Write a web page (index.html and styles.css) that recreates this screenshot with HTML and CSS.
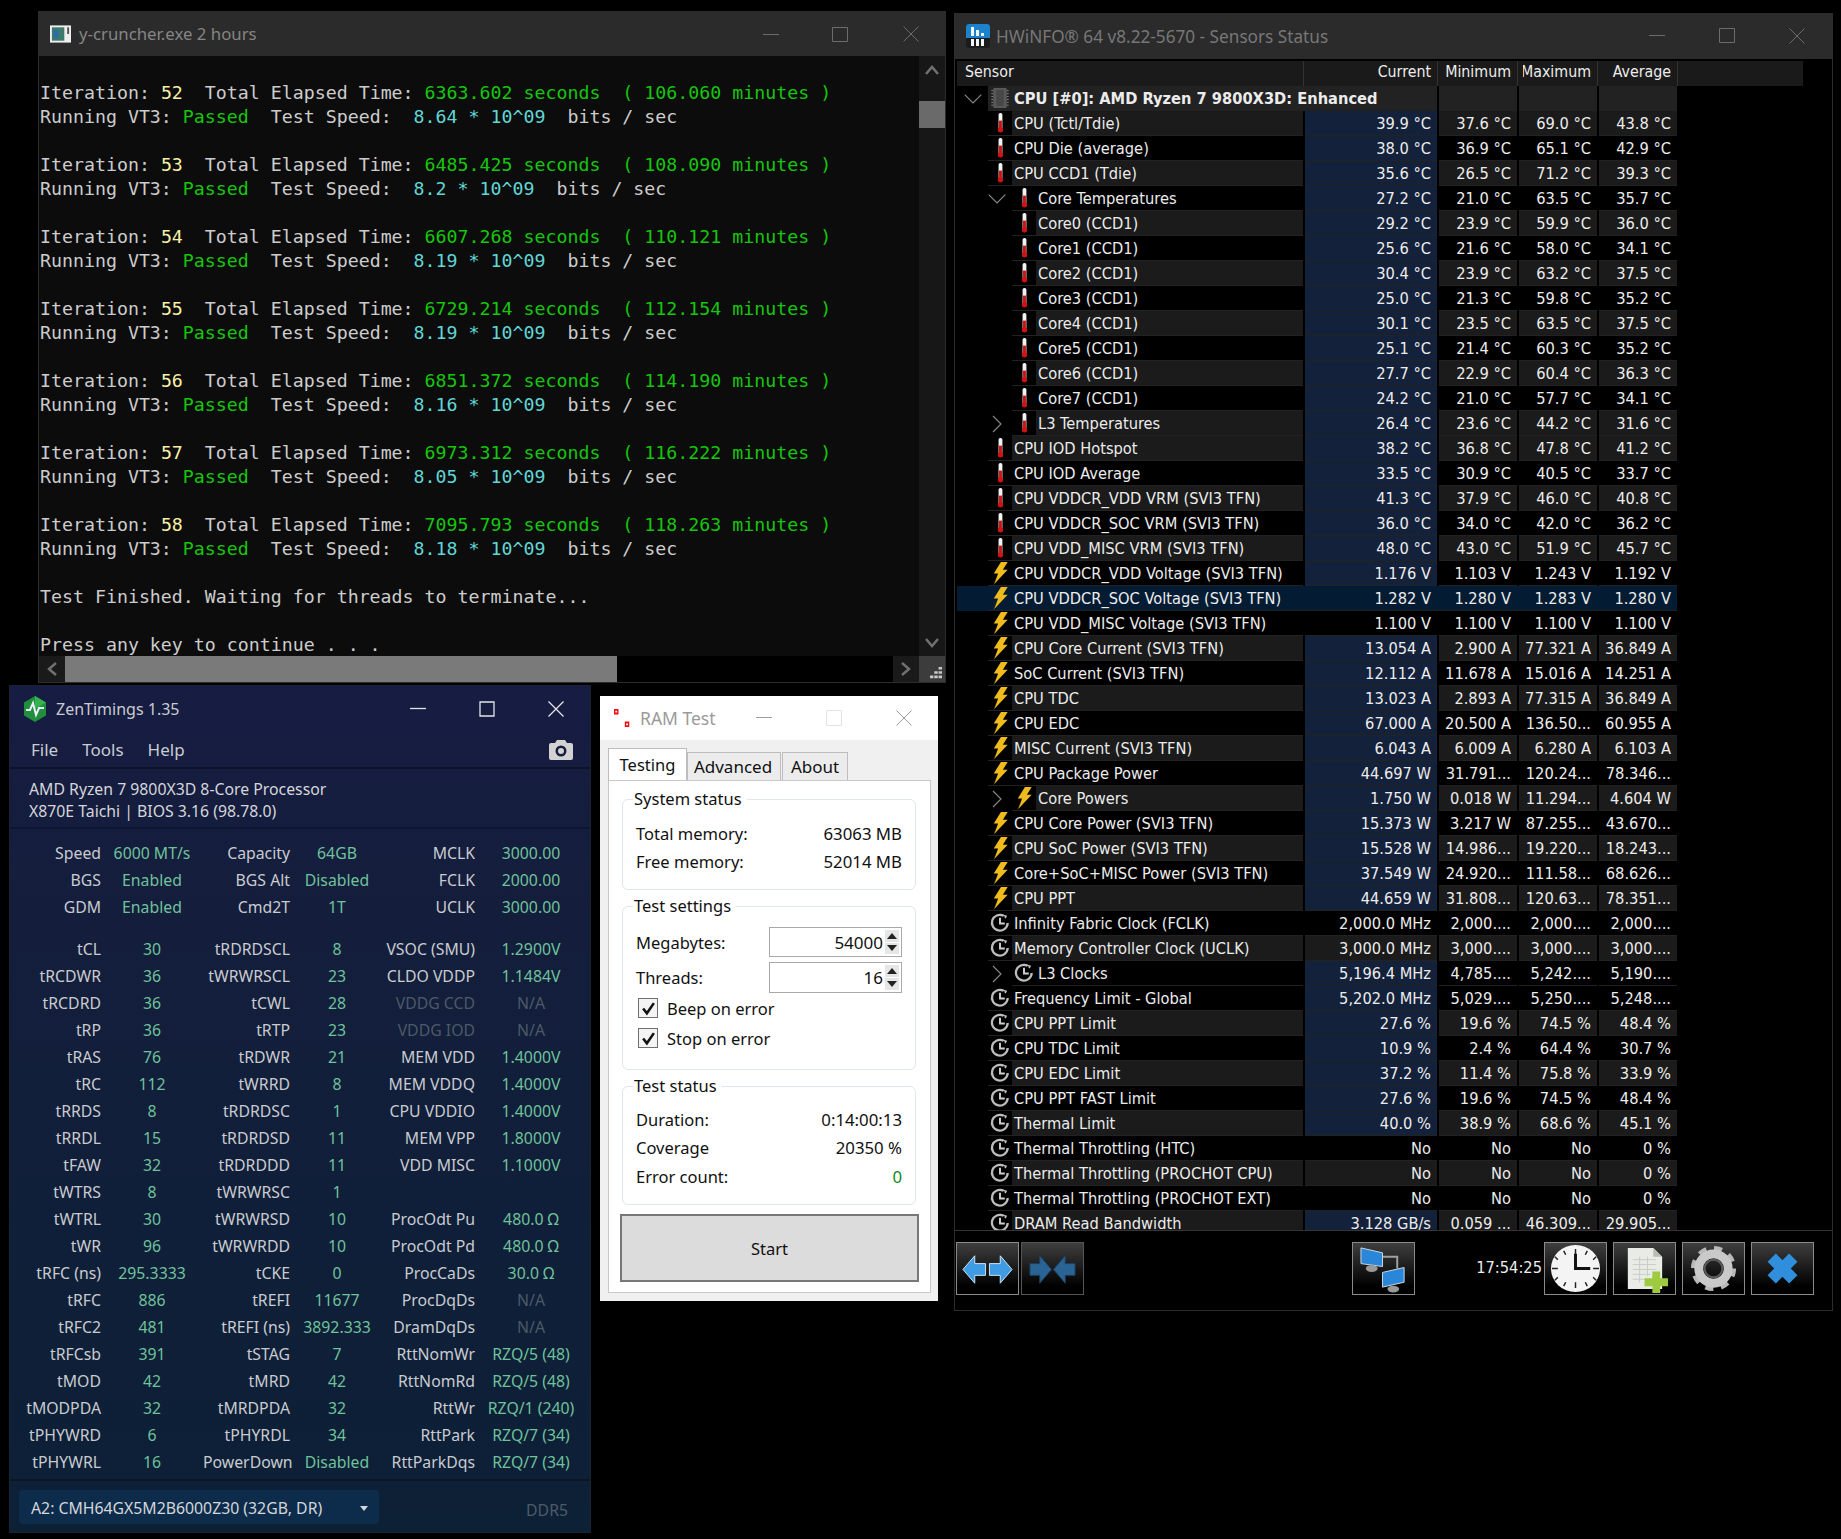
FILE: index.html
```html
<!DOCTYPE html>
<html lang="en">
<head>
<meta charset="utf-8">
<title>Desktop</title>
<link rel="stylesheet" href="styles.css">
</head>
<body>
<svg class="sprite" xmlns="http://www.w3.org/2000/svg">
  <symbol id="t" viewBox="0 0 24 25"><rect x="10.500" y="2" width="4" height="17" rx="1.800" fill="#f2f2f2"/><rect x="11" y="10" width="3" height="9" fill="#c91414"/><circle cx="12.500" cy="19.600" r="2.800" fill="#d31212"/></symbol>
  <symbol id="b" viewBox="0 0 24 25"><path d="M13 1h7l-5 8h5L6 24l4-11H5.500z" fill="#f0bb1c"/><path d="M10 13 6 24l-1 1z" fill="#6d5a1c"/></symbol>
  <symbol id="k" viewBox="0 0 24 25"><path d="M15.500 4.900A8.200 8.200 0 1 0 20 12.500" fill="none" stroke="#bcbcbc" stroke-width="2.400"/><path d="M12.300 3.500l6 2-1 2" fill="none" stroke="#bcbcbc" stroke-width="1.600"/><path d="M12 7v6h5" fill="none" stroke="#d0d0d0" stroke-width="2"/></symbol>
  <symbol id="dn" viewBox="0 0 18 10"><path d="M.7.7 9 9 17.300.7" fill="none" stroke="#8a8a8a" stroke-width="1.100"/></symbol>
  <symbol id="rt" viewBox="0 0 18 18"><path d="M5 1l8 8-8 8" fill="none" stroke="#8a8a8a" stroke-width="1.100"/></symbol>
</svg>

<main class="desk">

<section class="win con">
  <header class="con-title">
    <svg class="con-icon" viewBox="0 0 22 18"><rect width="22" height="18" fill="#eeeeee"/><rect x="2" y="2" width="13" height="14" fill="#3d7a6c"/><rect x="4" y="5" width="5" height="8" fill="#2e6aa8"/><rect x="18" y="2" width="2" height="7" fill="#555"/></svg>
    <span class="con-name">y-cruncher.exe 2 hours</span>
    <span class="ctl ctl-con">
      <svg viewBox="0 0 16 16"><path d="M0 8.500h16"/></svg>
      <svg viewBox="0 0 16 16"><path d="M.5 1.500h15v14H.5z"/></svg>
      <svg viewBox="0 0 16 16"><path d="M.5.500l15 15M15.500.500l-15 15"/></svg>
    </span>
  </header>
  <div class="con-body">
    <div class="con-text">
      <div class="ln"></div>
      <div class="ln">Iteration: <b class="y">52</b>  Total Elapsed Time: <b class="g">6363.602 seconds  ( 106.060 minutes )</b></div>
      <div class="ln">Running VT3: <b class="g">Passed</b>  Test Speed:  <b class="c">8.64 * 10^09</b>  bits / sec</div>
      <div class="ln"></div>
      <div class="ln">Iteration: <b class="y">53</b>  Total Elapsed Time: <b class="g">6485.425 seconds  ( 108.090 minutes )</b></div>
      <div class="ln">Running VT3: <b class="g">Passed</b>  Test Speed:  <b class="c">8.2 * 10^09</b>  bits / sec</div>
      <div class="ln"></div>
      <div class="ln">Iteration: <b class="y">54</b>  Total Elapsed Time: <b class="g">6607.268 seconds  ( 110.121 minutes )</b></div>
      <div class="ln">Running VT3: <b class="g">Passed</b>  Test Speed:  <b class="c">8.19 * 10^09</b>  bits / sec</div>
      <div class="ln"></div>
      <div class="ln">Iteration: <b class="y">55</b>  Total Elapsed Time: <b class="g">6729.214 seconds  ( 112.154 minutes )</b></div>
      <div class="ln">Running VT3: <b class="g">Passed</b>  Test Speed:  <b class="c">8.19 * 10^09</b>  bits / sec</div>
      <div class="ln"></div>
      <div class="ln">Iteration: <b class="y">56</b>  Total Elapsed Time: <b class="g">6851.372 seconds  ( 114.190 minutes )</b></div>
      <div class="ln">Running VT3: <b class="g">Passed</b>  Test Speed:  <b class="c">8.16 * 10^09</b>  bits / sec</div>
      <div class="ln"></div>
      <div class="ln">Iteration: <b class="y">57</b>  Total Elapsed Time: <b class="g">6973.312 seconds  ( 116.222 minutes )</b></div>
      <div class="ln">Running VT3: <b class="g">Passed</b>  Test Speed:  <b class="c">8.05 * 10^09</b>  bits / sec</div>
      <div class="ln"></div>
      <div class="ln">Iteration: <b class="y">58</b>  Total Elapsed Time: <b class="g">7095.793 seconds  ( 118.263 minutes )</b></div>
      <div class="ln">Running VT3: <b class="g">Passed</b>  Test Speed:  <b class="c">8.18 * 10^09</b>  bits / sec</div>
      <div class="ln"></div>
      <div class="ln">Test Finished. Waiting for threads to terminate...</div>
      <div class="ln"></div>
      <div class="ln">Press any key to continue . . .</div>
    </div>
    <div class="vbar">
      <svg class="bar-arrow" viewBox="0 0 16 12"><path d="M2 10l6-7 6 7"/></svg>
      <div class="vthumb"></div>
      <svg class="bar-arrow vdown" viewBox="0 0 16 12"><path d="M2 2l6 7 6-7"/></svg>
    </div>
  </div>
  <div class="hbar">
    <span class="hbtn"><svg class="bar-arrow" viewBox="0 0 12 16"><path d="M10 2L3 8l7 6"/></svg></span>
    <div class="hthumb"></div>
    <span class="hbtn hright"><svg class="bar-arrow" viewBox="0 0 12 16"><path d="M2 2l7 6-7 6"/></svg></span>
    <span class="grip"><svg viewBox="0 0 14 14"><path d="M10 0h4v3h-4zM5 5h4v3H5zM10 5h4v3h-4zM0 10h4v3H0zM5 10h4v3H5zM10 10h4v3h-4z"/></svg></span>
  </div>
</section>

<section class="win zen">
  <header class="zen-title">
    <svg class="zen-logo" viewBox="0 0 24 26"><path d="M12 0l11 6.500v13L12 26 1 19.500v-13z" fill="#1f8f3c"/><path d="M12 0l11 6.500L12 13z" fill="#34b34f"/><path d="M3 14h4l3-7 3 12 3-7h5" fill="none" stroke="#eef" stroke-width="2"/></svg>
    <span class="zen-name">ZenTimings 1.35</span>
    <span class="ctl ctl-zen">
      <svg viewBox="0 0 16 16"><path d="M0 7.500h16"/></svg>
      <svg viewBox="0 0 16 16"><path d="M1 1h14v14H1z"/></svg>
      <svg viewBox="0 0 16 16"><path d="M.5.500l15 15M15.500.500l-15 15"/></svg>
    </span>
  </header>
  <nav class="zen-menu">
    <span>File</span><span>Tools</span><span>Help</span>
    <svg class="zen-cam" viewBox="0 0 24 20"><path fill-rule="evenodd" d="M8 0h8l2 3h4a2 2 0 0 1 2 2v13a2 2 0 0 1-2 2H2a2 2 0 0 1-2-2V5a2 2 0 0 1 2-2h4zM12 5.500a5.500 5.500 0 1 0 0 11 5.500 5.500 0 0 0 0-11zM12 8a3 3 0 1 1 0 6 3 3 0 0 1 0-6z" fill="#d2d2d2"/></svg>
  </nav>
  <div class="zen-cpu">AMD Ryzen 7 9800X3D 8-Core Processor<br>X870E Taichi | BIOS 3.16 (98.78.0)</div>
  <div class="zen-body">
    <div class="zgrid zgrid-top">
      <span>Speed</span><i>6000 MT/s</i><span>Capacity</span><i>64GB</i><span>MCLK</span><i>3000.00</i>
      <span>BGS</span><i>Enabled</i><span>BGS Alt</span><i>Disabled</i><span>FCLK</span><i>2000.00</i>
      <span>GDM</span><i>Enabled</i><span>Cmd2T</span><i>1T</i><span>UCLK</span><i>3000.00</i>
    </div>
    <div class="zgrid">
      <span>tCL</span><i>30</i><span>tRDRDSCL</span><i>8</i><span>VSOC (SMU)</span><i>1.2900V</i>
      <span>tRCDWR</span><i>36</i><span>tWRWRSCL</span><i>23</i><span>CLDO VDDP</span><i>1.1484V</i>
      <span>tRCDRD</span><i>36</i><span>tCWL</span><i>28</i><span class="dim">VDDG CCD</span><i class="dim">N/A</i>
      <span>tRP</span><i>36</i><span>tRTP</span><i>23</i><span class="dim">VDDG IOD</span><i class="dim">N/A</i>
      <span>tRAS</span><i>76</i><span>tRDWR</span><i>21</i><span>MEM VDD</span><i>1.4000V</i>
      <span>tRC</span><i>112</i><span>tWRRD</span><i>8</i><span>MEM VDDQ</span><i>1.4000V</i>
      <span>tRRDS</span><i>8</i><span>tRDRDSC</span><i>1</i><span>CPU VDDIO</span><i>1.4000V</i>
      <span>tRRDL</span><i>15</i><span>tRDRDSD</span><i>11</i><span>MEM VPP</span><i>1.8000V</i>
      <span>tFAW</span><i>32</i><span>tRDRDDD</span><i>11</i><span>VDD MISC</span><i>1.1000V</i>
      <span>tWTRS</span><i>8</i><span>tWRWRSC</span><i>1</i><span></span><i></i>
      <span>tWTRL</span><i>30</i><span>tWRWRSD</span><i>10</i><span>ProcOdt Pu</span><i>480.0 Ω</i>
      <span>tWR</span><i>96</i><span>tWRWRDD</span><i>10</i><span>ProcOdt Pd</span><i>480.0 Ω</i>
      <span>tRFC (ns)</span><i>295.3333</i><span>tCKE</span><i>0</i><span>ProcCaDs</span><i>30.0 Ω</i>
      <span>tRFC</span><i>886</i><span>tREFI</span><i>11677</i><span>ProcDqDs</span><i class="dim">N/A</i>
      <span>tRFC2</span><i>481</i><span>tREFI (ns)</span><i>3892.333</i><span>DramDqDs</span><i class="dim">N/A</i>
      <span>tRFCsb</span><i>391</i><span>tSTAG</span><i>7</i><span>RttNomWr</span><i>RZQ/5 (48)</i>
      <span>tMOD</span><i>42</i><span>tMRD</span><i>42</i><span>RttNomRd</span><i>RZQ/5 (48)</i>
      <span>tMODPDA</span><i>32</i><span>tMRDPDA</span><i>32</i><span>RttWr</span><i>RZQ/1 (240)</i>
      <span>tPHYWRD</span><i>6</i><span>tPHYRDL</span><i>34</i><span>RttPark</span><i>RZQ/7 (34)</i>
      <span>tPHYWRL</span><i>16</i><span>PowerDown</span><i>Disabled</i><span>RttParkDqs</span><i>RZQ/7 (34)</i>
    </div>
  </div>
  <footer class="zen-foot">
    <div class="zen-sel"><span>A2: CMH64GX5M2B6000Z30 (32GB, DR)</span><em class="caret"></em></div>
    <span class="zen-ddr">DDR5</span>
  </footer>
</section>

<section class="win ram">
  <header class="ram-title">
    <svg class="ram-icon" viewBox="0 0 20 20"><path d="M0 0h5v6H0zM12 14h5v6h-5z" fill="#f01010"/><path d="M1.500 2h2v2h-2zM13.500 16h2v2h-2z" fill="#fff"/></svg>
    <span class="ram-name">RAM Test</span>
    <span class="ctl ctl-ram">
      <svg viewBox="0 0 16 16"><path class="ln-c" d="M0 7.500h16"/></svg>
      <svg viewBox="0 0 16 16"><path class="fd" d="M.5.500h15v15H.5z"/></svg>
      <svg viewBox="0 0 16 16"><path class="ln-c" d="M.5.500l15 15M15.500.500l-15 15"/></svg>
    </span>
  </header>
  <div class="tabs">
    <span class="tab on">Testing</span><span class="tab t-adv">Advanced</span><span class="tab t-abt">About</span>
  </div>
  <div class="page">
    <div class="grp grp-sys">
      <span class="legend">System status</span>
      <div class="kv"><span>Total memory:</span><span>63063 MB</span></div>
      <div class="kv"><span>Free memory:</span><span>52014 MB</span></div>
    </div>
    <div class="grp grp-set">
      <span class="legend">Test settings</span>
      <div class="field"><span>Megabytes:</span><div class="spin"><span class="num">54000</span><span class="arrows"><em class="up"></em><em class="down"></em></span></div></div>
      <div class="field"><span>Threads:</span><div class="spin"><span class="num">16</span><span class="arrows"><em class="up"></em><em class="down"></em></span></div></div>
      <label class="chk"><span class="box"><svg viewBox="0 0 14 14"><path d="M2 7l3.500 4.500L12 2"/></svg></span>Beep on error</label>
      <label class="chk"><span class="box"><svg viewBox="0 0 14 14"><path d="M2 7l3.500 4.500L12 2"/></svg></span>Stop on error</label>
    </div>
    <div class="grp grp-stat">
      <span class="legend">Test status</span>
      <div class="kv"><span>Duration:</span><span>0:14:00:13</span></div>
      <div class="kv"><span>Coverage</span><span>20350 %</span></div>
      <div class="kv"><span>Error count:</span><span class="ok">0</span></div>
    </div>
    <button class="start">Start</button>
  </div>
</section>

<section class="win hw">
  <header class="hw-title">
    <svg class="hw-logo" viewBox="0 0 24 24"><rect width="24" height="24" rx="3" fill="#1b1b1b"/><path d="M3 0h18a3 3 0 0 1 3 3v11H0V3a3 3 0 0 1 3-3z" fill="#1d82cc"/><path d="M5 3h3v9H5zM10 6h3v6h-3zM15 9h3v3h-3zM5 15h3v7H5zM10 15h3v7h-3zM15 15h3v7h-3z" fill="#f2f6fa"/></svg>
    <span class="hw-name">HWiNFO® 64 v8.22-5670 - Sensors Status</span>
    <span class="ctl ctl-hw">
      <svg viewBox="0 0 16 16"><path d="M0 7.500h16"/></svg>
      <svg viewBox="0 0 16 16"><path d="M.5.500h15v14H.5z"/></svg>
      <svg viewBox="0 0 16 16"><path d="M.5.500l15 15M15.500.500l-15 15"/></svg>
    </span>
  </header>
  <div class="hw-table">
    <div class="hdr"><span class="h-s">Sensor</span><span class="h-c">Current</span><span class="h-v">Minimum</span><span class="h-v">Maximum</span><span class="h-v">Average</span></div>

    <div class="row top"><span class="ind"><svg class="dn"><use href="#dn"/></svg></span><span class="ic"><svg viewBox="0 0 24 25"><path d="M3 5h2M3 8h2M3 11h2M3 14h2M3 17h2M3 20h2M19 5h2M19 8h2M19 11h2M19 14h2M19 17h2M19 20h2" stroke="#8a8a8a"/><rect x="5" y="2" width="14" height="21" rx="1" fill="#5a5a5a"/><path d="M8 4h8v17H8z" fill="#484848"/></svg></span><span class="lbl">CPU [#0]: AMD Ryzen 7 9800X3D: Enhanced</span><span class="v"></span><span class="v"></span><span class="v"></span></div>

    <div class="row d"><span class="ind"></span><span class="ic"><svg><use href="#t"/></svg></span><span class="lbl">CPU (Tctl/Tdie)</span><span class="cur">39.9 °C</span><span class="v">37.6 °C</span><span class="v">69.0 °C</span><span class="v">43.8 °C</span></div>
    <div class="row"><span class="ind"></span><span class="ic"><svg><use href="#t"/></svg></span><span class="lbl">CPU Die (average)</span><span class="cur">38.0 °C</span><span class="v">36.9 °C</span><span class="v">65.1 °C</span><span class="v">42.9 °C</span></div>
    <div class="row d"><span class="ind"></span><span class="ic"><svg><use href="#t"/></svg></span><span class="lbl">CPU CCD1 (Tdie)</span><span class="cur">35.6 °C</span><span class="v">26.5 °C</span><span class="v">71.2 °C</span><span class="v">39.3 °C</span></div>
    <div class="row l2"><span class="ind"><svg class="dn"><use href="#dn"/></svg></span><span class="ic"><svg><use href="#t"/></svg></span><span class="lbl">Core Temperatures</span><span class="cur">27.2 °C</span><span class="v">21.0 °C</span><span class="v">63.5 °C</span><span class="v">35.7 °C</span></div>
    <div class="row d l2"><span class="ind"></span><span class="ic"><svg><use href="#t"/></svg></span><span class="lbl">Core0 (CCD1)</span><span class="cur">29.2 °C</span><span class="v">23.9 °C</span><span class="v">59.9 °C</span><span class="v">36.0 °C</span></div>
    <div class="row l2"><span class="ind"></span><span class="ic"><svg><use href="#t"/></svg></span><span class="lbl">Core1 (CCD1)</span><span class="cur">25.6 °C</span><span class="v">21.6 °C</span><span class="v">58.0 °C</span><span class="v">34.1 °C</span></div>
    <div class="row d l2"><span class="ind"></span><span class="ic"><svg><use href="#t"/></svg></span><span class="lbl">Core2 (CCD1)</span><span class="cur">30.4 °C</span><span class="v">23.9 °C</span><span class="v">63.2 °C</span><span class="v">37.5 °C</span></div>
    <div class="row l2"><span class="ind"></span><span class="ic"><svg><use href="#t"/></svg></span><span class="lbl">Core3 (CCD1)</span><span class="cur">25.0 °C</span><span class="v">21.3 °C</span><span class="v">59.8 °C</span><span class="v">35.2 °C</span></div>
    <div class="row d l2"><span class="ind"></span><span class="ic"><svg><use href="#t"/></svg></span><span class="lbl">Core4 (CCD1)</span><span class="cur">30.1 °C</span><span class="v">23.5 °C</span><span class="v">63.5 °C</span><span class="v">37.5 °C</span></div>
    <div class="row l2"><span class="ind"></span><span class="ic"><svg><use href="#t"/></svg></span><span class="lbl">Core5 (CCD1)</span><span class="cur">25.1 °C</span><span class="v">21.4 °C</span><span class="v">60.3 °C</span><span class="v">35.2 °C</span></div>
    <div class="row d l2"><span class="ind"></span><span class="ic"><svg><use href="#t"/></svg></span><span class="lbl">Core6 (CCD1)</span><span class="cur">27.7 °C</span><span class="v">22.9 °C</span><span class="v">60.4 °C</span><span class="v">36.3 °C</span></div>
    <div class="row l2"><span class="ind"></span><span class="ic"><svg><use href="#t"/></svg></span><span class="lbl">Core7 (CCD1)</span><span class="cur">24.2 °C</span><span class="v">21.0 °C</span><span class="v">57.7 °C</span><span class="v">34.1 °C</span></div>
    <div class="row d l2"><span class="ind"><svg class="rt"><use href="#rt"/></svg></span><span class="ic"><svg><use href="#t"/></svg></span><span class="lbl">L3 Temperatures</span><span class="cur">26.4 °C</span><span class="v">23.6 °C</span><span class="v">44.2 °C</span><span class="v">31.6 °C</span></div>
    <div class="row d"><span class="ind"></span><span class="ic"><svg><use href="#t"/></svg></span><span class="lbl">CPU IOD Hotspot</span><span class="cur">38.2 °C</span><span class="v">36.8 °C</span><span class="v">47.8 °C</span><span class="v">41.2 °C</span></div>
    <div class="row"><span class="ind"></span><span class="ic"><svg><use href="#t"/></svg></span><span class="lbl">CPU IOD Average</span><span class="cur">33.5 °C</span><span class="v">30.9 °C</span><span class="v">40.5 °C</span><span class="v">33.7 °C</span></div>
    <div class="row d"><span class="ind"></span><span class="ic"><svg><use href="#t"/></svg></span><span class="lbl">CPU VDDCR_VDD VRM (SVI3 TFN)</span><span class="cur">41.3 °C</span><span class="v">37.9 °C</span><span class="v">46.0 °C</span><span class="v">40.8 °C</span></div>
    <div class="row"><span class="ind"></span><span class="ic"><svg><use href="#t"/></svg></span><span class="lbl">CPU VDDCR_SOC VRM (SVI3 TFN)</span><span class="cur">36.0 °C</span><span class="v">34.0 °C</span><span class="v">42.0 °C</span><span class="v">36.2 °C</span></div>
    <div class="row d"><span class="ind"></span><span class="ic"><svg><use href="#t"/></svg></span><span class="lbl">CPU VDD_MISC VRM (SVI3 TFN)</span><span class="cur">48.0 °C</span><span class="v">43.0 °C</span><span class="v">51.9 °C</span><span class="v">45.7 °C</span></div>
    <div class="row"><span class="ind"></span><span class="ic"><svg><use href="#b"/></svg></span><span class="lbl">CPU VDDCR_VDD Voltage (SVI3 TFN)</span><span class="cur">1.176 V</span><span class="v">1.103 V</span><span class="v">1.243 V</span><span class="v">1.192 V</span></div>
    <div class="row sel"><span class="ind"></span><span class="ic"><svg><use href="#b"/></svg></span><span class="lbl">CPU VDDCR_SOC Voltage (SVI3 TFN)</span><span class="cur">1.282 V</span><span class="v">1.280 V</span><span class="v">1.283 V</span><span class="v">1.280 V</span></div>
    <div class="row"><span class="ind"></span><span class="ic"><svg><use href="#b"/></svg></span><span class="lbl">CPU VDD_MISC Voltage (SVI3 TFN)</span><span class="cur off">1.100 V</span><span class="v">1.100 V</span><span class="v">1.100 V</span><span class="v">1.100 V</span></div>
    <div class="row d"><span class="ind"></span><span class="ic"><svg><use href="#b"/></svg></span><span class="lbl">CPU Core Current (SVI3 TFN)</span><span class="cur">13.054 A</span><span class="v">2.900 A</span><span class="v">77.321 A</span><span class="v">36.849 A</span></div>
    <div class="row"><span class="ind"></span><span class="ic"><svg><use href="#b"/></svg></span><span class="lbl">SoC Current (SVI3 TFN)</span><span class="cur">12.112 A</span><span class="v">11.678 A</span><span class="v">15.016 A</span><span class="v">14.251 A</span></div>
    <div class="row d"><span class="ind"></span><span class="ic"><svg><use href="#b"/></svg></span><span class="lbl">CPU TDC</span><span class="cur">13.023 A</span><span class="v">2.893 A</span><span class="v">77.315 A</span><span class="v">36.849 A</span></div>
    <div class="row"><span class="ind"></span><span class="ic"><svg><use href="#b"/></svg></span><span class="lbl">CPU EDC</span><span class="cur">67.000 A</span><span class="v">20.500 A</span><span class="v">136.50...</span><span class="v">60.955 A</span></div>
    <div class="row d"><span class="ind"></span><span class="ic"><svg><use href="#b"/></svg></span><span class="lbl">MISC Current (SVI3 TFN)</span><span class="cur">6.043 A</span><span class="v">6.009 A</span><span class="v">6.280 A</span><span class="v">6.103 A</span></div>
    <div class="row"><span class="ind"></span><span class="ic"><svg><use href="#b"/></svg></span><span class="lbl">CPU Package Power</span><span class="cur">44.697 W</span><span class="v">31.791...</span><span class="v">120.24...</span><span class="v">78.346...</span></div>
    <div class="row d l2"><span class="ind"><svg class="rt"><use href="#rt"/></svg></span><span class="ic"><svg><use href="#b"/></svg></span><span class="lbl">Core Powers</span><span class="cur">1.750 W</span><span class="v">0.018 W</span><span class="v">11.294...</span><span class="v">4.604 W</span></div>
    <div class="row"><span class="ind"></span><span class="ic"><svg><use href="#b"/></svg></span><span class="lbl">CPU Core Power (SVI3 TFN)</span><span class="cur">15.373 W</span><span class="v">3.217 W</span><span class="v">87.255...</span><span class="v">43.670...</span></div>
    <div class="row d"><span class="ind"></span><span class="ic"><svg><use href="#b"/></svg></span><span class="lbl">CPU SoC Power (SVI3 TFN)</span><span class="cur">15.528 W</span><span class="v">14.986...</span><span class="v">19.220...</span><span class="v">18.243...</span></div>
    <div class="row"><span class="ind"></span><span class="ic"><svg><use href="#b"/></svg></span><span class="lbl">Core+SoC+MISC Power (SVI3 TFN)</span><span class="cur">37.549 W</span><span class="v">24.920...</span><span class="v">111.58...</span><span class="v">68.626...</span></div>
    <div class="row d"><span class="ind"></span><span class="ic"><svg><use href="#b"/></svg></span><span class="lbl">CPU PPT</span><span class="cur">44.659 W</span><span class="v">31.808...</span><span class="v">120.63...</span><span class="v">78.351...</span></div>
    <div class="row"><span class="ind"></span><span class="ic"><svg><use href="#k"/></svg></span><span class="lbl">Infinity Fabric Clock (FCLK)</span><span class="cur off">2,000.0 MHz</span><span class="v">2,000....</span><span class="v">2,000....</span><span class="v">2,000....</span></div>
    <div class="row d"><span class="ind"></span><span class="ic"><svg><use href="#k"/></svg></span><span class="lbl">Memory Controller Clock (UCLK)</span><span class="cur off">3,000.0 MHz</span><span class="v">3,000....</span><span class="v">3,000....</span><span class="v">3,000....</span></div>
    <div class="row l2"><span class="ind"><svg class="rt"><use href="#rt"/></svg></span><span class="ic"><svg><use href="#k"/></svg></span><span class="lbl">L3 Clocks</span><span class="cur">5,196.4 MHz</span><span class="v">4,785....</span><span class="v">5,242....</span><span class="v">5,190....</span></div>
    <div class="row"><span class="ind"></span><span class="ic"><svg><use href="#k"/></svg></span><span class="lbl">Frequency Limit - Global</span><span class="cur">5,202.0 MHz</span><span class="v">5,029....</span><span class="v">5,250....</span><span class="v">5,248....</span></div>
    <div class="row d"><span class="ind"></span><span class="ic"><svg><use href="#k"/></svg></span><span class="lbl">CPU PPT Limit</span><span class="cur">27.6 %</span><span class="v">19.6 %</span><span class="v">74.5 %</span><span class="v">48.4 %</span></div>
    <div class="row"><span class="ind"></span><span class="ic"><svg><use href="#k"/></svg></span><span class="lbl">CPU TDC Limit</span><span class="cur">10.9 %</span><span class="v">2.4 %</span><span class="v">64.4 %</span><span class="v">30.7 %</span></div>
    <div class="row d"><span class="ind"></span><span class="ic"><svg><use href="#k"/></svg></span><span class="lbl">CPU EDC Limit</span><span class="cur">37.2 %</span><span class="v">11.4 %</span><span class="v">75.8 %</span><span class="v">33.9 %</span></div>
    <div class="row"><span class="ind"></span><span class="ic"><svg><use href="#k"/></svg></span><span class="lbl">CPU PPT FAST Limit</span><span class="cur">27.6 %</span><span class="v">19.6 %</span><span class="v">74.5 %</span><span class="v">48.4 %</span></div>
    <div class="row d"><span class="ind"></span><span class="ic"><svg><use href="#k"/></svg></span><span class="lbl">Thermal Limit</span><span class="cur">40.0 %</span><span class="v">38.9 %</span><span class="v">68.6 %</span><span class="v">45.1 %</span></div>
    <div class="row"><span class="ind"></span><span class="ic"><svg><use href="#k"/></svg></span><span class="lbl">Thermal Throttling (HTC)</span><span class="cur off">No</span><span class="v">No</span><span class="v">No</span><span class="v">0 %</span></div>
    <div class="row d"><span class="ind"></span><span class="ic"><svg><use href="#k"/></svg></span><span class="lbl">Thermal Throttling (PROCHOT CPU)</span><span class="cur off">No</span><span class="v">No</span><span class="v">No</span><span class="v">0 %</span></div>
    <div class="row"><span class="ind"></span><span class="ic"><svg><use href="#k"/></svg></span><span class="lbl">Thermal Throttling (PROCHOT EXT)</span><span class="cur off">No</span><span class="v">No</span><span class="v">No</span><span class="v">0 %</span></div>
    <div class="row d"><span class="ind"></span><span class="ic"><svg><use href="#k"/></svg></span><span class="lbl">DRAM Read Bandwidth</span><span class="cur">3.128 GB/s</span><span class="v">0.059 ...</span><span class="v">46.309...</span><span class="v">29.905...</span></div>
  </div>
  <footer class="hw-foot">
    <button class="tb"><svg viewBox="0 0 62 52"><path d="M6 27 18 13v8h11v12H18v8zM56 27 44 13v8H33v12h11v8z" fill="#3f9ce3" stroke="#cbe3f5"/></svg></button>
    <button class="tb tb-dim"><svg viewBox="0 0 62 52"><path d="M30 27 18 13v8H8v12h10v8zM32 27l12-14v8h10v12H44v8z" fill="#2a6494" stroke="#1d3f5e"/></svg></button>
    <button class="tb tb-net"><svg viewBox="0 0 62 52"><path d="M30 14h15v12" fill="none" stroke="#a0a0a0" stroke-width="2"/><path d="M8 5l22 5v14L8 21z" fill="#2a86d8" stroke="#cfd8e0"/><ellipse cx="19" cy="26" rx="6" ry="3.500" fill="#9a9a9a"/><path d="M30 30l22-5v15l-22 5z" fill="#2a86d8" stroke="#cfd8e0"/><ellipse cx="41" cy="47" rx="6" ry="3.500" fill="#9a9a9a"/></svg></button>
    <span class="clock-time">17:54:25</span>
    <button class="tb"><svg viewBox="0 0 62 52"><ellipse cx="31" cy="26" rx="25" ry="24" fill="#f4f4f4"/><path d="M31 6v6M31 40v6M7 26h6M49 26h6M19 8l2 4M43 8l-2 4M19 44l2-4M43 44l-2-4M10 14l3 3M52 14l-3 3M10 38l3-3M52 38l-3-3" stroke="#222" stroke-width="1.500"/><path d="M31 11v15h15" fill="none" stroke="#111" stroke-width="3"/></svg></button>
    <button class="tb"><svg viewBox="0 0 62 52"><path d="M14 5h26l9 9v33H14z" fill="#e9ebe6"/><path d="M40 5v9h9z" fill="#b9bcb4"/><path d="M19 17h24M19 22h24M19 27h24M19 32h18M19 37h18M26 14v26M34 14v20" stroke="#c9ccc4"/><path d="M39 29h8v7h8v8h-8v7h-8v-7h-8v-8h8z" fill="#9ccb3f"/></svg></button>
    <button class="tb"><svg viewBox="0 0 62 52"><circle cx="31" cy="26" r="20" fill="none" stroke="#b9b9b9" stroke-width="6" stroke-dasharray="8 7.700"/><circle cx="31" cy="26" r="15" fill="none" stroke="#c9c9c9" stroke-width="9"/><circle cx="31" cy="26" r="9" fill="none" stroke="#5c5c5c" stroke-width="2"/></svg></button>
    <button class="tb"><svg viewBox="0 0 62 52"><path d="M20 15l22 22M42 15 20 37" fill="none" stroke="#2f8fdc" stroke-width="12"/></svg></button>
  </footer>
</section>

</main>
</body>
</html>
```

FILE: styles.css
```css
html, body { margin: 0; padding: 0; background: #000; }
body { width: 1841px; height: 1539px; overflow: hidden; }
.sprite { display: none; }
.desk { position: relative; width: 1841px; height: 1539px; background: #000; }
.win { position: absolute; box-sizing: border-box; overflow: hidden; }
.ctl { margin-left: auto; display: flex; }
.ctl svg { display: block; width: 16px; height: 16px; fill: none; stroke-width: 1; }

/* console */
.con { left: 38px; top: 11px; width: 908px; height: 672px; background: #0c0c0c; border: 1px solid #2c2c2c; border-top: 0; display: flex; flex-direction: column; }
.con-title { height: 45px; flex: none; background: #2b2b2b; display: flex; align-items: center; padding-left: 11px; font: 16.8px "Noto Sans", sans-serif; color: #858585; }
.con-icon { width: 21px; height: 18px; margin-right: 8px; }
.ctl-con { gap: 53px; padding-right: 26px; }
.ctl-con svg { stroke: #6c6c6c; }
.ctl-con svg:last-child { margin-left: 2px; }
.con-body { flex: 1; display: flex; min-height: 0; }
.con-text { flex: 1; padding: 1px 0 0 1px; font: 18.25px/24px "DejaVu Sans Mono", monospace; color: #cccccc; overflow: hidden; }
.ln { height: 24px; white-space: pre; }
.con-text b { font-weight: 400; }
.y { color: #f9f1a5; }
.g { color: #16c60c; }
.c { color: #61d6d6; }
.vbar { width: 26px; flex: none; background: #171717; display: flex; flex-direction: column; align-items: center; padding-top: 8px; box-sizing: border-box; }
.vthumb { width: 26px; height: 27px; margin-top: 25px; background: #6a6a6a; }
.bar-arrow { width: 16px; height: 12px; fill: none; stroke: #707070; stroke-width: 2.500; }
.vdown { margin-top: auto; margin-bottom: 7px; }
.hbar { height: 26px; flex: none; display: flex; background: #000; }
.hbtn { width: 26px; flex: none; background: #1a1a1a; display: flex; align-items: center; justify-content: center; }
.hbtn .bar-arrow { width: 12px; height: 16px; }
.hthumb { width: 552px; background: #7a7a7a; }
.hright { margin-left: auto; }
.grip { width: 26px; flex: none; background: #3c3c3c; display: flex; align-items: flex-end; justify-content: flex-end; padding: 0 3px 3px 0; box-sizing: border-box; }
.grip svg { width: 12px; height: 12px; fill: #c8c8c8; }

/* zentimings */
.zen { left: 9px; top: 685px; width: 582px; height: 848px; border: 1px solid #1c2230; display: flex; flex-direction: column; background: linear-gradient(#171c42 0%, #141e3c 25%, #0c2036 100%); font-family: "Noto Sans", sans-serif; color: #c9cbd0; }
.zen-title { height: 45px; flex: none; display: flex; align-items: center; padding-left: 13px; font-size: 16px; }
.zen-logo { width: 24px; height: 26px; margin-right: 9px; }
.ctl-zen { gap: 53px; padding-right: 26px; }
.ctl-zen svg { stroke: #e4e4e8; stroke-width: 1.300; }
.zen-menu { height: 38px; flex: none; box-sizing: border-box; display: flex; align-items: center; gap: 24px; padding: 1px 17px 0 21px; font-size: 17px; border-bottom: 2px solid #0d1228; }
.zen-cam { width: 24px; height: 20px; margin-left: auto; }
.zen-cpu { height: 60px; flex: none; box-sizing: border-box; padding: 9px 0 0 19px; font-size: 15.8px; line-height: 22px; border-bottom: 2px solid #0d1730; color: #d4d6da; }
.zen-body { flex: 1; padding-top: 10px; min-height: 0; }
.zgrid { display: grid; grid-template-columns: 91px 102px 87px 94px 91px 112px; grid-auto-rows: 27px; align-items: center; font-size: 15.8px; white-space: nowrap; }
.zgrid-top { margin-bottom: 15px; }
.zgrid span { text-align: right; }
.zgrid i { font-style: normal; text-align: center; color: #6fc29b; }
.zgrid .dim { color: #4c5a68; }
.zen-foot { height: 51px; flex: none; border-top: 2px solid #0a1626; display: flex; align-items: center; padding: 0 22px 0 9px; }
.zen-sel { width: 360px; height: 34px; border-radius: 4px; background: #0d2c4b; display: flex; align-items: center; padding: 3px 11px 0 12px; box-sizing: border-box; font-size: 15.8px; color: #d4d6da; }
.caret { margin-left: auto; width: 0; height: 0; border: 4.500px solid transparent; border-top: 5px solid #d4d6da; border-bottom: 0; }
.zen-ddr { margin-left: auto; padding-top: 6px; font-size: 15.8px; color: #4f5b68; }

/* ram test */
.ram { left: 600px; top: 696px; width: 338px; height: 605px; background: #f0f0f0; font-family: "Noto Sans", sans-serif; color: #111; font-size: 16.5px; }
.ram-title { height: 44px; background: #fff; display: flex; align-items: center; padding-left: 14px; }
.ram-icon { width: 18px; height: 18px; margin-right: 8px; }
.ram-name { color: #9a9a9a; font-size: 17.5px; }
.ctl-ram { gap: 54px; padding-right: 26px; }
.ctl-ram .ln-c { stroke: #9c9c9c; }
.ctl-ram .fd { stroke: #e2e2e2; }
.tabs { display: flex; align-items: flex-end; height: 37px; margin-top: 3px; padding-left: 8px; box-sizing: border-box; }
.tab { height: 28px; box-sizing: border-box; display: flex; align-items: center; justify-content: center; background: #ececec; border: 1px solid #bdbdbd; border-bottom: 0; font-size: 17px; }
.t-adv { width: 94px; padding-right: 2px; }
.t-abt { width: 66px; margin-left: 1px; }
.tab.on { height: 32px; width: 79px; background: #fff; font-size: 16.5px; position: relative; z-index: 1; align-items: flex-start; padding-top: 4px; }
.page { width: 323px; height: 513px; margin-left: 8px; box-sizing: border-box; background: #fff; border: 1px solid #c8c8c8; padding: 18px 0 0 13px; position: relative; }
.grp { position: relative; width: 294px; box-sizing: border-box; border: 1px solid #dfe6ec; border-radius: 6px; padding: 0 13px; }
.grp-sys { height: 91px; padding-top: 19px; margin-bottom: 16px; }
.grp-set { height: 164px; padding-top: 20px; margin-bottom: 16px; }
.grp-stat { height: 119px; padding-top: 18px; }
.legend { position: absolute; left: 10px; top: -12px; padding: 0 5px 0 1px; background: #fff; line-height: 22px; }
.kv { display: flex; justify-content: space-between; align-items: center; height: 28.500px; }
.kv span:last-child { font-size: 16.8px; }
.ok { color: #0a8a1a; }
.field { display: flex; align-items: center; height: 30px; margin-bottom: 5px; }
.field:nth-of-type(2) { height: 31px; margin-bottom: 5px; }
.spin { margin-left: auto; width: 133px; height: 100%; box-sizing: border-box; border: 1px solid #a9a9a9; display: flex; justify-content: flex-end; align-items: center; padding-right: 2px; }
.num { margin-right: 2px; font-size: 17px; }
.arrows { width: 14px; align-self: stretch; margin: 2px 0; display: flex; flex-direction: column; gap: 1px; }
.arrows em { flex: 1; background: #e6e6e6; display: flex; align-items: center; justify-content: center; }
.arrows em::after { content: ""; border: 5px solid transparent; }
.up::after { border-top: 0 !important; border-bottom: 6px solid #222 !important; }
.down::after { border-bottom: 0 !important; border-top: 6px solid #222 !important; }
.chk { display: flex; align-items: center; height: 20px; margin: 0 0 10px 2px; }
.box { width: 20px; height: 20px; box-sizing: border-box; border: 1px solid #6f6f6f; background: #f4f4f4; margin-right: 9px; display: flex; align-items: center; justify-content: center; }
.box svg { width: 15px; height: 15px; fill: none; stroke: #111; stroke-width: 2.400; }
.start { display: block; width: 299px; height: 68px; margin: 9px 0 0 -2px; background: #dcdcdc; border: 2px solid #777; font: 16.5px "Noto Sans", sans-serif; color: #111; padding: 0; }

/* hwinfo */
.hw { left: 954px; top: 13px; width: 879px; height: 1298px; background: #000; border: 1px solid #2c2c2c; border-top: 0; display: flex; flex-direction: column; font-family: "DejaVu Sans Condensed", "DejaVu Sans", sans-serif; font-stretch: condensed; color: #ececec; font-size: 16.3px; }
.hw-title { height: 46px; flex: none; background: #2b2b2b; display: flex; align-items: center; padding-left: 11px; color: #777; font: 17.2px "Noto Sans", sans-serif; }
.hw-logo { width: 24px; height: 24px; margin-right: 6px; }
.ctl-hw { gap: 54px; padding-right: 27px; }
.ctl-hw svg { stroke: #6c6c6c; }
.hw-table { height: 1169px; flex: none; overflow: hidden; margin: 2px 0 0 2px; }
.hdr { display: flex; height: 25px; width: 846px; background: #1a1a1a; font-size: 15.8px; line-height: 21px; white-space: nowrap; }
.hdr span { box-sizing: border-box; border-right: 1px solid #333; overflow: hidden; display: flex; justify-content: flex-end; padding-right: 6px; }
.hdr .h-s { width: 347px; justify-content: flex-start; padding-left: 8px; }
.hdr .h-c { width: 134px; }
.hdr .h-v { width: 80px; border-left: 5px solid #1a1a1a; }
.row { display: flex; width: 720px; height: 25px; line-height: 26px; white-space: nowrap; }
.ind { width: 31px; flex: none; display: flex; align-items: center; justify-content: flex-end; }
.l2 .ind { width: 55px; }
.ind svg { margin-right: 6px; }
.dn { width: 18px; height: 10px; }
.rt { width: 18px; height: 18px; }
.ic { width: 24px; flex: none; border-bottom: 1px solid #222; box-sizing: border-box; }
.ic svg { display: block; width: 24px; height: 24px; }
.lbl { flex: 1; padding-left: 2px; min-width: 0; border-bottom: 1px solid #222; box-sizing: border-box; margin-right: 2px; }
.cur { width: 132px; flex: none; box-sizing: border-box; text-align: right; padding-right: 6px; background: #14213a; border-bottom: 1px solid #222; margin-right: 2px; }
.v { width: 78px; flex: none; box-sizing: border-box; text-align: right; padding-right: 6px; border-bottom: 1px solid #222; margin-right: 2px; }
.v:last-child { margin-right: 0; }
.row.d .lbl, .row.d .v, .row.d .cur.off { background: #1b1b1b; }
.cur.off { background: #000; }
.top .ic, .top .lbl, .top .v { background: #222; }
.top .lbl { font-weight: 700; }
.row.sel { background: #041c33; }
.sel .ic, .sel .lbl, .sel .cur, .sel .v { background: #041c33; }
.sel .lbl, .sel .cur, .sel .v { margin-right: 0; padding-right: 8px; }
.sel .v:last-child { padding-right: 6px; }
.sel .v { width: 80px; }
.sel .v:last-child { width: 78px; }
.sel .cur { width: 134px; }
.hw-foot { flex: 1; border-top: 1px solid #333; display: flex; align-items: flex-start; padding: 11px 18px 0 1px; gap: 2px; box-sizing: border-box; }
.tb { width: 63px; height: 53px; padding: 0; flex: none; border: 1px solid #8a8a8a; background: linear-gradient(#3e3e3e, #000 85%); display: block; }
.tb svg { display: block; width: 61px; height: 51px; }
.tb-dim { border-color: #555; }
.tb-net { margin-left: 266px; }
.clock-time { margin-left: auto; line-height: 52px; }
.tb:nth-last-child(3), .tb:nth-last-child(2), .tb:nth-last-child(1) { margin-left: 4px; }
```
